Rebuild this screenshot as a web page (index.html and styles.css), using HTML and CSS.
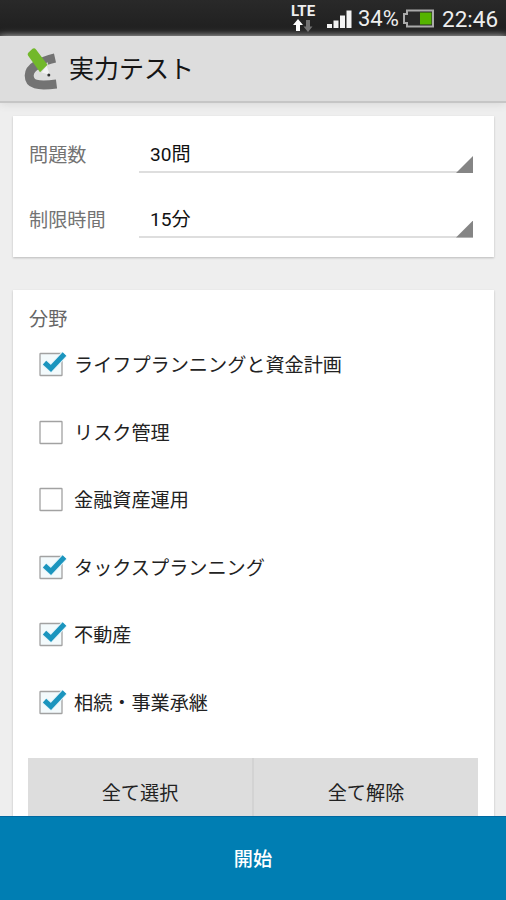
FILE: index.html
```html
<!DOCTYPE html>
<html lang="ja">
<head>
<meta charset="utf-8">
<title>実力テスト</title>
<link rel="stylesheet" href="styles.css">
</head>
<body>
<svg class="defs" aria-hidden="true">
  <symbol id="box" viewBox="0 0 30 28">
    <rect x="2" y="4.500" width="22" height="22" rx="0.600" fill="#fff" stroke="#a2a2a2" stroke-width="1.300"/>
  </symbol>
  <symbol id="checked" viewBox="0 0 30 28">
    <rect x="2" y="4.500" width="22" height="22" rx="0.600" fill="#f3fafc" stroke="#a2a2a2" stroke-width="1.300"/>
    <path d="M6.500 13.600L12.900 19.400L26.500 5" fill="none" stroke="#e2f4fa" stroke-width="7"/>
    <path d="M6.500 13.600L12.900 19.400L26.500 5" fill="none" stroke="#1b95be" stroke-width="5"/>
  </symbol>
</svg>
<div class="screen">
  <div class="status">
    <div class="lte"><span>LTE</span>
      <svg width="22" height="14" viewBox="0 0 22 14"><path d="M6 0L11 6H8V12H4V6H1Z" fill="#fff"/><path d="M16 13L11.500 7.500H14V1H18V7.500H20.500Z" fill="#727272"/></svg>
    </div>
    <svg class="signal" width="26" height="20" viewBox="0 0 26 20"><path d="M0 15h5v4H0zM6.500 11.500h5V19h-5zM13 6.500h5V19h-5zM19.500 1.500h5V19h-5z" fill="#f2f2f2"/></svg>
    <span class="percent">34%</span>
    <svg class="battery" width="33" height="20" viewBox="0 0 33 20"><path d="M5 1.500H31V17.500H5V14H2V5H5Z" fill="#292929" stroke="#aaa" stroke-width="2"/><path d="M18 3.500h11.500v12H18z" fill="#55b300"/></svg>
    <span class="clock">22:46</span>
  </div>
  <header class="appbar">
    <svg class="logo" width="36" height="44" viewBox="0 0 36 44">
      <path d="M32 11C19 14 6.200 20 6.200 28.500C6.200 37.500 14 39.500 33.500 37" fill="none" stroke="#737373" stroke-width="9"/>
      <path d="M24 17L28.500 29.500L17 26Z" fill="#f3f3f3" stroke="#ddd" stroke-width="2"/>
      <path d="M5.500 5.500L9.500 1.700Q11.500 0.500 13 2.500L24.500 17.800L17 25.300L5 8.500Q4 7 5.500 5.500Z" fill="#72b82b"/>
      <circle cx="25.800" cy="28" r="1.500" fill="#333"/>
    </svg>
    <h1>実力テスト</h1>
  </header>
  <main>
    <section class="card settings">
      <div class="field"><span class="label">問題数</span><div class="spinner"><span>30問</span></div></div>
      <div class="field"><span class="label">制限時間</span><div class="spinner"><span>15分</span></div></div>
    </section>
    <section class="card topics">
      <h2>分野</h2>
      <ul>
        <li><svg class="check"><use href="#checked"/></svg><span>ライフプランニングと資金計画</span></li>
        <li><svg class="check"><use href="#box"/></svg><span>リスク管理</span></li>
        <li><svg class="check"><use href="#box"/></svg><span>金融資産運用</span></li>
        <li><svg class="check"><use href="#checked"/></svg><span>タックスプランニング</span></li>
        <li><svg class="check"><use href="#checked"/></svg><span>不動産</span></li>
        <li><svg class="check"><use href="#checked"/></svg><span>相続・事業承継</span></li>
      </ul>
      <div class="buttons"><button>全て選択</button><button>全て解除</button></div>
    </section>
  </main>
  <button class="start">開始</button>
</div>
</body>
</html>
```
FILE: styles.css
```css
* { box-sizing: border-box; }
body { margin: 0; font-family: Roboto, "Noto Sans CJK JP", sans-serif; font-size: 19.15px; color: #222; }
h1, h2, ul { margin: 0; padding: 0; font-weight: 400; }
button { border: 0; padding: 0; font: inherit; color: inherit; }
.defs { position: absolute; width: 0; height: 0; }
.screen { width: 506px; height: 900px; display: flex; flex-direction: column; overflow: hidden; background: #eee; }

.status { flex: none; height: 36px; display: flex; align-items: center; justify-content: flex-end; padding: 2px 8px 0 0; background: linear-gradient(#292929, #202020 85%, #303030); color: #eee; line-height: 34px; }
.lte { width: 26px; display: flex; flex-direction: column; align-items: center; font: 700 15px/14px Roboto, sans-serif; margin: -2px 11px 0 0; }
.lte svg { margin-top: 1px; }
.signal { margin-right: 5px; }
.percent { width: 42px; margin-right: 2px; font-size: 22px; white-space: nowrap; }
.battery { margin-right: 7px; }
.clock { width: 56px; white-space: nowrap; font-size: 22.500px; }

.appbar { flex: none; height: 67px; display: flex; align-items: center; padding-left: 23px; background: #ddd; border-bottom: 2px solid #c6c6c6; box-shadow: 0 1px 8px #d8d8d8; }
.appbar h1 { margin: 2px 0 0 10px; font-size: 25px; line-height: 36px; color: #151515; }

main { flex: 1; min-height: 0; overflow: hidden; padding: 13px 12px 0 13px; }
.card { background: #fff; box-shadow: 0 1px 2px #bbb; }
.settings { height: 141px; padding: 7px 21px 0 16px; margin-bottom: 33px; }
.field { height: 64.500px; display: flex; }
.label { width: 110px; line-height: 66px; color: #737373; }
.spinner { position: relative; flex: 1; height: 50px; padding-left: 11px; border-bottom: 2px solid #dedede; line-height: 63px; color: #111; }
.spinner::after { content: ""; position: absolute; right: 0; bottom: -2px; width: 17px; height: 17px; background: #858585; clip-path: polygon(100% 0, 100% 100%, 0 100%); }
.topics { height: 560px; padding: 8px 16px 0 15px; }
.topics h2 { height: 33px; padding-left: 1px; font-size: 19.15px; line-height: 43px; color: #666; }
ul { list-style: none; }
li { height: 67.500px; display: flex; align-items: center; padding-left: 10px; line-height: 30px; }
li span { margin-top: 3px; }
.check { width: 30px; height: 28px; margin: -3px 6px 0 0; flex: none; }
.buttons { display: flex; height: 68px; margin-top: 22px; background: #ddd; }
.buttons button { flex: 1; background: transparent; }
.buttons button + button { border-left: 2px solid #d3d3d3; }

.start { flex: none; height: 84px; background: #007eb3; border-top: 1px solid #0068a0; padding-bottom: 2px; color: #fff; font-weight: 500; }
```
